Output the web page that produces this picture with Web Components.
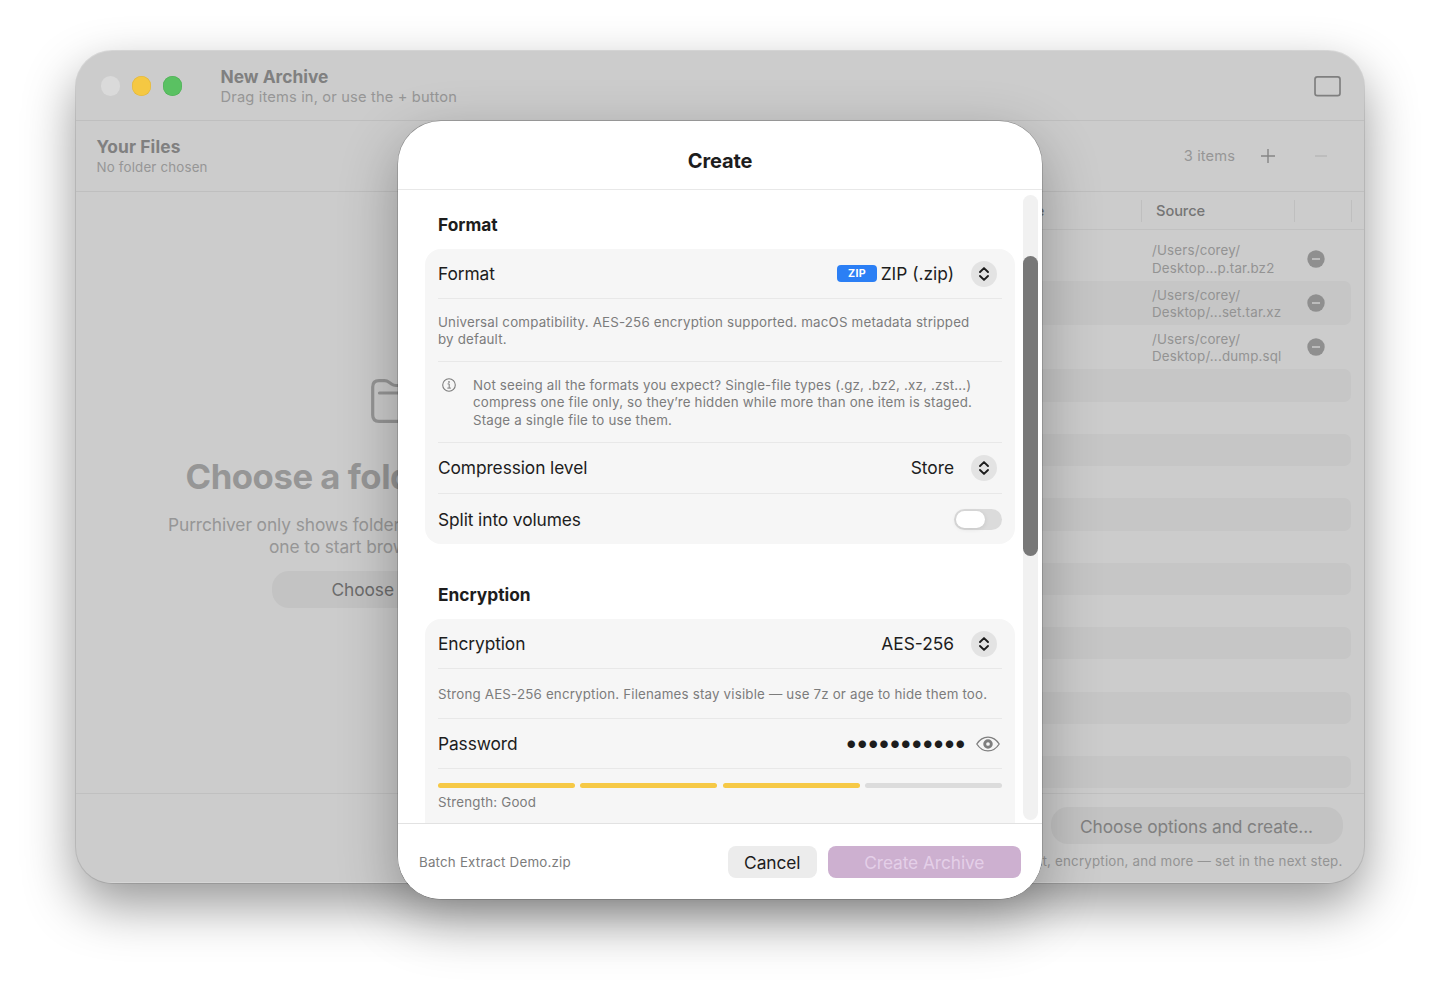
<!DOCTYPE html>
<html lang="en">
<head>
<meta charset="utf-8">
<title>New Archive</title>
<style>
body {
    margin:0; height:999px; overflow:hidden;
    display:flex; flex-direction:column; align-items:center;
    background:white;
    font:17.33px/21.5px Inter,"Liberation Sans",sans-serif;
    letter-spacing:-.09px;
    -webkit-font-smoothing:antialiased;
}
</style>
</head>
<body>
<archive-window></archive-window>
<create-sheet></create-sheet>
<script>
class Base extends HTMLElement {
    constructor() {
        super();
        this.shadow = this.attachShadow({ mode: 'open' });
        this.shadow.innerHTML = `<style>*,*::before,*::after {box-sizing:border-box;} ${this.css}</style>${this.elements}`;
    }
}
customElements.define('ui-icon', class extends Base {
    static paths = {
        panel: [27, 22, '<rect x="1" y="1.9" width="25" height="18.8" rx="2.4" stroke-width="1.7"/>'],
        plus: [14, 14, '<path d="M7 0V14M0 7H14" stroke-width="1.4"/>'],
        minus: [12, 14, '<path d="M0 7H12" stroke-width="1.3"/>'],
        remove: [18, 18, '<circle cx="9" cy="9" r="8.7" fill="currentColor" stroke="none"/><path d="M5 9H13" stroke="#cbcbcb" stroke-width="1.5"/>'],
        folder: [56, 44, '<path d="M1.7 36V8Q1.7 1.7 8 1.7H13.5Q16 1.7 18 3.2L20.5 5Q22.5 6.5 25 6.5H48Q54.3 6.5 54.3 13V36Q54.3 42.3 48 42.3H8Q1.7 42.3 1.7 36Z M8.5 14H48" stroke-width="3.2" stroke-linecap="round"/>'],
        info: [14, 14, '<circle cx="7" cy="7" r="6.3" stroke-width="1.1"/><path d="M5.6 5.9H7.2V10M5.3 10.1H8.9" stroke-width="1"/><circle cx="7" cy="3.9" r=".85" fill="currentColor" stroke="none"/>'],
        updown: [12, 14, '<path d="M2 5L6 1.1L10 5M2 9L6 12.9L10 9" stroke-width="1.9" stroke-linecap="round" stroke-linejoin="round"/>'],
        eye: [24, 16, '<path d="M.8 8C3.6 3.6 7.6 1.1 12 1.1S20.4 3.6 23.2 8C20.4 12.4 16.4 14.9 12 14.9S3.6 12.4 .8 8Z" stroke-width="1.3"/><circle cx="12" cy="8" r="3.3" stroke-width="2.9"/>'],
    };
    get css() {
        return `:host {display:block; flex:none;} svg {display:block; fill:none; stroke:currentColor; overflow:visible;}`;
    }
    get elements() {
        return `<svg></svg>`;
    }
    connectedCallback() {
        const [w, h, shape] = this.constructor.paths[this.getAttribute('name')];
        const svg = this.shadow.querySelector('svg');
        Object.entries({ width: w, height: h, viewBox: `0 0 ${w} ${h}` }).forEach(([k, v]) => svg.setAttribute(k, v));
        svg.innerHTML = shape;
    }
});
customElements.define('title-bar', class extends Base {
    get css() {
        return `:host {display:flex; align-items:center; height:70px; padding:1px 23.5px 0 24.5px; border-bottom:1px solid #bfbfbf;}
        i {width:19.5px; height:19.5px; margin-right:11.5px; border-radius:50%; background:#dadada;}
        i:nth-of-type(2) {background:#f5c842; box-shadow:inset 0 0 0 .5px #e0b53c;}
        i:nth-of-type(3) {background:#5ac162; box-shadow:inset 0 0 0 .5px #4fae56;}
        div {flex:1; margin:1px 0 0 27px; color:#969696; font-size:14.67px; line-height:20px;}
        b {display:block; color:#808080; font-size:17.33px; font-weight:650; letter-spacing:0;}
        span {letter-spacing:.16px;}
        ui-icon {color:#7f7f7f;}`;
    }
    get elements() {
        return `<i></i><i></i><i></i><div><b>New Archive</b><span>Drag items in, or use the + button</span></div><ui-icon name="panel"></ui-icon>`;
    }
});
customElements.define('folder-pane', class extends Base {
    get css() {
        return `:host {display:flex; flex-direction:column; color:#969696;}
        header {height:71px; padding:16px 20.5px 0; border-bottom:1px solid #bfbfbf; font-size:13.33px; line-height:20px; letter-spacing:.17px;}
        header b {display:block; color:#808080; font-size:17.33px; font-weight:650; letter-spacing:.1px;}
        section {flex:1; padding:187px 0 0 92px; white-space:nowrap;}
        ui-icon {margin-left:202.5px;}
        h1 {margin:31px 0 0 17.5px; font-size:34.67px; line-height:44px; font-weight:700; letter-spacing:-.45px;}
        p {margin:16px 0 0;}
        p span {display:block;}
        p span + span {margin-left:101px;}
        a {display:block; width:252px; height:37px; margin:14px 0 0 104px; padding-left:59.5px; border-radius:17px; background:#c3c3c3; color:#6c6c6c; line-height:38px;}`;
    }
    get elements() {
        return `<header><b>Your Files</b><span>No folder chosen</span></header>
        <section><ui-icon name="folder"></ui-icon><h1>Choose a folder</h1>
        <p><span>Purrchiver only shows folders</span><span>one to start browsing</span></p><a>Choose</a></section>`;
    }
});
customElements.define('staged-item', class extends Base {
    get css() {
        return `:host {display:flex; align-items:center; height:44.33px; padding:0 26px 0 432px; border-radius:7px; color:#939393; font-size:13.33px; line-height:17.33px; letter-spacing:.18px;}
        p {flex:1; margin:2px 0 0; white-space:nowrap;}
        ui-icon {color:#8f8f8f;}`;
    }
    get elements() {
        return `<p><slot></slot></p><ui-icon name="remove"></ui-icon>`;
    }
});
customElements.define('staging-pane', class extends Base {
    get css() {
        return `:host {display:flex; flex-direction:column; color:#969696; overflow:hidden;}
        header {display:flex; align-items:center; justify-content:flex-end; height:71px; padding:0 37px 0 0; border-bottom:1px solid #bfbfbf; font-size:14.67px; letter-spacing:.1px;}
        header span {padding-top:1px;}
        header ui-icon {margin-left:26px; color:#858585;}
        header ui-icon + ui-icon {margin-left:40px; color:#b8b8b8;}
        nav {display:flex; align-items:center; height:38px; border-bottom:1px solid #c1c1c1; color:#757575; font-size:14.67px; font-weight:500;}
        nav span {display:flex; align-items:center; height:22px; padding-top:3px; border-right:1px solid #bfbfbf;}
        nav span:nth-child(1) {width:422px; padding-left:295px;}
        nav span:nth-child(2) {width:153px; padding-left:14px;}
        nav span:nth-child(3) {width:57px;}
        main {flex:1; overflow:hidden; padding:6.5px 13.5px 0 0;}
        staged-item:nth-of-type(2),main div:nth-of-type(odd) {background:#c6c6c6;}
        main div {height:32.23px; border-radius:7px;}`;
    }
    get elements() {
        const files = ['Desktop...p.tar.bz2', 'Desktop/...set.tar.xz', 'Desktop/...dump.sql'];
        return `<header><span>3 items</span><ui-icon name="plus"></ui-icon><ui-icon name="minus"></ui-icon></header>
        <nav><span>Size</span><span>Source</span><span></span></nav>
        <main>${files.map(f => `<staged-item>/Users/corey/<br>${f}</staged-item>`).join('')}${'<div></div>'.repeat(13)}</main>`;
    }
});
customElements.define('archive-window', class extends Base {
    get css() {
        return `:host {display:flex; flex-direction:column; width:1288px; height:831.5px; margin-top:51px; overflow:hidden; flex:none;
            border-radius:36px; background:#ccc;
            box-shadow:0 0 0 1px rgba(0,0,0,.1),0 22px 52px rgba(0,0,0,.41);}
        div {flex:1; min-height:0; display:grid; grid-template-columns:644px 1fr;}
        footer {height:90px; padding:13.5px 21.5px 0; border-top:1px solid #c0c0c0; box-shadow:inset 0 -1px #d6d6d6;
            display:flex; flex-direction:column; align-items:flex-end; color:#949494; font-size:13.33px; letter-spacing:.19px;}
        a {width:292px; height:37px; margin-bottom:7px; border-radius:17px; background:#c3c3c3; color:#808080; font-size:17.33px; line-height:39px; letter-spacing:-.09px; text-align:center;}`;
    }
    get elements() {
        return `<title-bar></title-bar><div><folder-pane></folder-pane><staging-pane></staging-pane></div>
        <footer><a>Choose options and create...</a><span>Format, encryption, and more — set in the next step.</span></footer>`;
    }
});
customElements.define('form-row', class extends Base {
    get css() {
        return `:host {display:flex; align-items:center; height:var(--h,50px); border-bottom:1px solid #e8e8e8;}
        :host([note]) {padding-top:var(--drop,1px); color:#7c7c7c; font-size:13.33px; line-height:17.5px; letter-spacing:.18px; white-space:nowrap;}
        :host(:last-child) {border-bottom:0;}
        label {flex:1;}`;
    }
    get elements() {
        return `<label><slot></slot></label><slot name="value"></slot>`;
    }
});
customElements.define('pop-up', class extends Base {
    get css() {
        return `:host {display:flex; align-items:center; padding-right:5px; letter-spacing:0;}
        span {display:grid; place-items:center; width:26px; height:26px; margin-left:17px; border-radius:50%; background:#e3e3e3; color:#1c1c1c;}
        ::slotted(b) {width:39.5px; height:17.5px; margin-right:4px; border-radius:4px; background:#2b7ff5; color:white; font-size:10.67px; line-height:18px; letter-spacing:.3px; text-align:center;}`;
    }
    get elements() {
        return `<slot></slot><span><ui-icon name="updown"></ui-icon></span>`;
    }
});
customElements.define('toggle-switch', class extends Base {
    get css() {
        return `:host {display:block; width:48px; height:21.5px; padding:2px; border-radius:11px; background:#dbdbdb;}
        i {display:block; width:28.5px; height:17.5px; border-radius:9px; background:white; box-shadow:0 1px 5px rgba(0,0,0,.1);}`;
    }
    get elements() {
        return `<i></i>`;
    }
});
customElements.define('strength-meter', class extends Base {
    get css() {
        return `:host {display:block; height:70px; padding-top:13.7px; color:#7c7c7c; font-size:13.33px; line-height:17.5px; letter-spacing:.19px;}
        div {display:grid; grid-template-columns:repeat(4,1fr); gap:5.33px; margin-bottom:5.5px;}
        i {height:5.33px; border-radius:3px; background:#f6c946;}
        i:last-child {background:#dcdcdc;}`;
    }
    get elements() {
        return `<div><i></i><i></i><i></i><i></i></div><slot></slot>`;
    }
});
customElements.define('form-section', class extends Base {
    get css() {
        return `:host {display:block;}
        h3 {margin:0 13px 13.5px; font-size:17.33px; line-height:21.5px; font-weight:650; letter-spacing:0;}
        div {padding:0 13px; border-radius:16px; background:#f6f6f6;}`;
    }
    get elements() {
        return `<h3></h3><div><slot></slot></div>`;
    }
    connectedCallback() {
        this.shadow.querySelector('h3').textContent = this.getAttribute('heading');
    }
});
customElements.define('create-sheet', class extends Base {
    get css() {
        return `:host {position:absolute; left:398px; top:121.2px; width:644px; height:777.8px; overflow:hidden;
            display:flex; flex-direction:column; border-radius:43px; background:white; color:#1d1d1d;
            box-shadow:0 0 0 .5px rgba(0,0,0,.3),0 20px 58px rgba(0,0,0,.3);}
        h2 {margin:0; height:69.3px; border-bottom:1.5px solid #e8e8e8; font-size:20px; line-height:80px; font-weight:650; letter-spacing:-.15px; text-align:center;}
        main {flex:1; min-height:0; display:flex; overflow:hidden;}
        article {flex:1; padding:23.6px 8px 0 27px;}
        form-section + form-section {margin-top:40.3px;}
        aside {width:15px; height:625px; margin:4.5px 4px 0 0; padding-top:61px; border-radius:8px; background:#f1f1f1;}
        aside i {display:block; height:300px; border-radius:8px; background:#787878;}
        .info {display:flex; gap:17.5px;}
        .info ui-icon {margin:1.2px 0 0 3.5px;}
        .secret {display:flex; align-items:center;}
        .secret span {margin:-2px 11.5px 0 0; font-size:24px; letter-spacing:-2.6px;}
        .secret ui-icon {margin-right:2px; color:#7e7e7e;}
        footer {display:flex; align-items:center; height:75.5px; padding:0 21px; border-top:1px solid #e2e2e2; background:white;}
        footer small {flex:1; padding-top:2px; color:#7c7c7c; font-size:13.33px; letter-spacing:.2px;}
        button {width:88.5px; height:32px; padding:0; border:0; border-radius:8px; background:#ececec; color:#1d1d1d; font:inherit; line-height:33px; letter-spacing:-.09px;}
        button + button {width:193.5px; margin-left:11px; background:#cdb0d0; color:#e4cfe8;}`;
    }
    get elements() {
        return `<h2>Create</h2>
        <main><article>
            <form-section heading="Format">
                <form-row>Format<pop-up slot="value"><b>ZIP</b>ZIP (.zip)</pop-up></form-row>
                <form-row note style="--h:63px; --drop:2px">Universal compatibility. AES-256 encryption supported. macOS metadata stripped<br>by default.</form-row>
                <form-row note style="--h:81px; --drop:2px"><div class="info"><ui-icon name="info"></ui-icon><div>Not seeing all the formats you expect? Single-file types (.gz, .bz2, .xz, .zst...)<br>compress one file only, so they’re hidden while more than one item is staged.<br>Stage a single file to use them.</div></div></form-row>
                <form-row style="--h:51px">Compression level<pop-up slot="value">Store</pop-up></form-row>
                <form-row style="padding-top:1px">Split into volumes<toggle-switch slot="value"></toggle-switch></form-row>
            </form-section>
            <form-section heading="Encryption">
                <form-row style="--h:50px">Encryption<pop-up slot="value">AES-256</pop-up></form-row>
                <form-row note style="--h:50px">Strong AES-256 encryption. Filenames stay visible — use 7z or age to hide them too.</form-row>
                <form-row>Password<div slot="value" class="secret"><span>•••••••••••</span><ui-icon name="eye"></ui-icon></div></form-row>
                <strength-meter>Strength: Good</strength-meter>
            </form-section>
        </article><aside><i></i></aside></main>
        <footer><small>Batch Extract Demo.zip</small><button>Cancel</button><button>Create Archive</button></footer>`;
    }
});
</script>
</body>
</html>
